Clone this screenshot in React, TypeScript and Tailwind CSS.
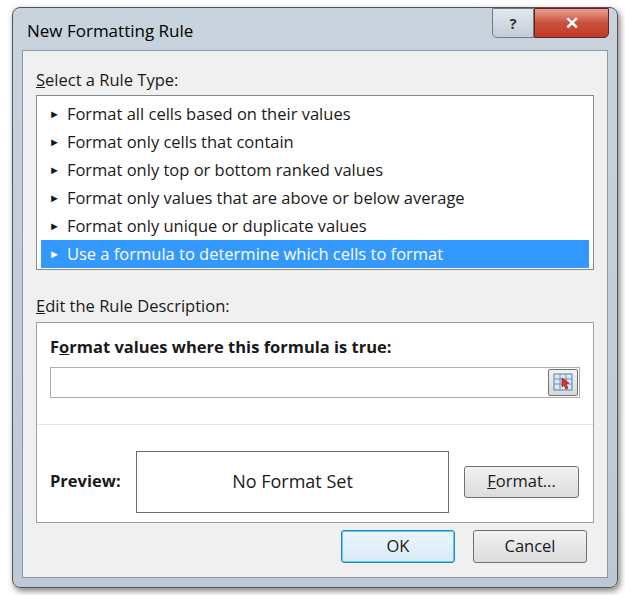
import React from "react";

const rows = [
  "Format all cells based on their values",
  "Format only cells that contain",
  "Format only top or bottom ranked values",
  "Format only values that are above or below average",
  "Format only unique or duplicate values",
  "Use a formula to determine which cells to format",
];

export default function App() {
  return (
    <div className="w-[625px] h-[595px] bg-white pt-[7px] pl-[12px] text-[16.5px] text-[#1a1a1a]" style={{ fontFamily: '"Open Sans","Noto Sans",sans-serif' }}>
      <div className="w-[606px] h-[581px] rounded-[8px] border border-[#555] bg-gradient-to-b from-[#c9d3de] to-[#bcc8d4] shadow-[2px_3px_6px_rgba(0,0,0,0.5)] flex flex-col px-[9px] pb-[9px]">
        <div className="h-[42px] flex items-start justify-between">
          <div className="pl-[5px] pt-[10px] text-[17px] text-black">New Formatting Rule</div>
          <div className="flex mr-[-1px]">
            <div className="w-[42px] h-[30px] border border-[#6b7a8a] rounded-bl-[5px] bg-gradient-to-b from-[#e3e8ee] to-[#c2ccd6] flex items-center justify-center text-[#333] font-bold text-[15px]">?</div>
            <div className="w-[75px] h-[30px] border border-[#6b2020] rounded-br-[5px] bg-gradient-to-b from-[#e8a090] via-[#c9503c] to-[#c23a25] flex items-center justify-center text-white font-bold text-[17px]">✕</div>
          </div>
        </div>
        <div className="flex-1 border border-[#8c98a6] bg-[#f0f0f0] px-[13px] pt-[18px] flex flex-col">
          <div className="h-[22px] leading-[22px]"><u>S</u>elect a Rule Type:</div>
          <div className="mt-[4px] h-[175px] border border-[#828790] bg-white p-[4px]">
            {rows.map((r, i) => (
              <div key={r} className={`h-[28px] flex items-center pl-[8px] ${i === 5 ? "bg-[#3399ff] text-white" : ""}`}>
                <span className="text-[11px] mr-[7px]">►</span>{r}
              </div>
            ))}
          </div>
          <div className="mt-[25px] h-[22px] leading-[22px]"><u>E</u>dit the Rule Description:</div>
          <div className="mt-[5px] h-[201px] border border-[#a0a0a0] bg-white px-[13px] flex flex-col">
            <div className="mt-[12px] font-bold">F<u>o</u>rmat values where this formula is true:</div>
            <div className="mt-[7px] h-[31px] border border-[#abadb3] flex justify-end items-center pr-[1px]">
              <div className="w-[30px] h-[27px] border border-[#707070] rounded-[2px] bg-gradient-to-b from-[#f2f2f2] to-[#d8d8d8] flex items-center justify-center">
                <svg width="20" height="18" viewBox="0 0 20 18">
                  <rect x="1" y="1" width="18" height="16" fill="#dbe8f5" stroke="#5a7fa8" />
                  <path d="M1 6h18M1 11h18M7 1v16M13 1v16" stroke="#6f92ba" />
                  <path d="M9 5l7 5-3 1 2 4-2 1-2-4-2 2z" fill="#d33" stroke="#811" strokeWidth="0.6" />
                </svg>
              </div>
            </div>
            <div className="mt-[26px] -mx-[13px] border-t border-[#dde4ea]" />
            <div className="mt-[26px] flex items-center">
              <div className="w-[86px] font-bold">Preview:</div>
              <div className="w-[313px] h-[62px] border border-[#6d6d6d] flex items-center justify-center text-[18px]">No Format Set</div>
              <div className="ml-[15px] w-[115px] h-[32px] border border-[#707070] rounded-[3px] bg-gradient-to-b from-[#f2f2f2] to-[#dcdcdc] flex items-center justify-center"><u>F</u>ormat...</div>
            </div>
          </div>
          <div className="mt-[7px] flex justify-end gap-[18px] pr-[7px]">
            <div className="w-[114px] h-[33px] border border-[#3c7fb1] rounded-[3px] bg-gradient-to-b from-[#eaf6fd] to-[#d9eaf5] shadow-[inset_0_0_0_1px_#48d3f8] flex items-center justify-center">OK</div>
            <div className="w-[114px] h-[33px] border border-[#707070] rounded-[3px] bg-gradient-to-b from-[#f2f2f2] to-[#dcdcdc] flex items-center justify-center">Cancel</div>
          </div>
        </div>
      </div>
    </div>
  );
}
